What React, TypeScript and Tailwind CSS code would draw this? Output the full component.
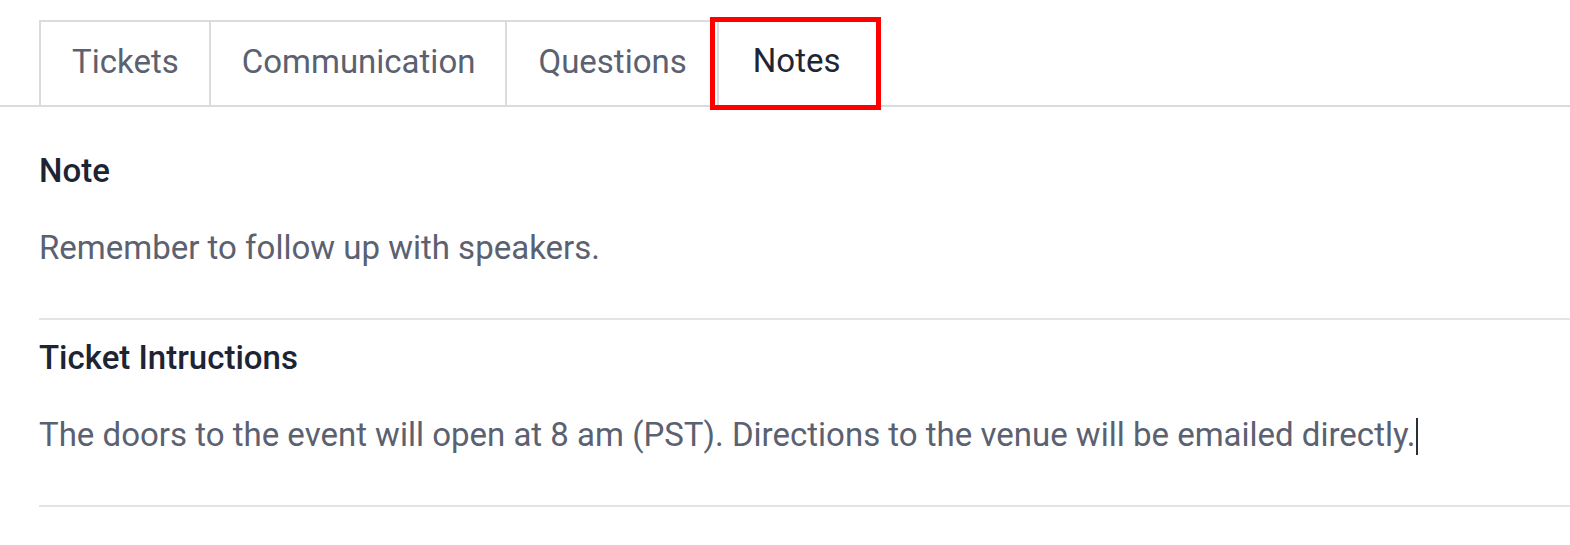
const tabs = ['Tickets', 'Communication', 'Questions', 'Notes'];

const Field = ({ label, value, caret }: { label: string; value: string; caret?: boolean }) => (
  <div className="border-b-2 border-[#e3e4e7]">
    <div className="pt-[18px] text-[33px] leading-[40px] font-medium text-[#1d2433]">{label}</div>
    <div className="mt-[37px] pb-[50px] text-[33px] leading-[40px] text-[#5b6170]">
      {value}
      {caret && <span className="inline-block w-[2px] h-[37px] bg-[#2a2f3a] align-[-9px]" />}
    </div>
  </div>
);

export default function App() {
  return (
    <div className="w-[1570px] h-[545px] bg-white overflow-hidden" style={{ fontFamily: 'Roboto, "Liberation Sans", sans-serif' }}>
      <div className="pt-[20px] border-b-2 border-[#d9dbdf]">
        <div className="flex pl-[39px] h-[85px]">
          {tabs.map((t, i) => {
            const active = t === 'Notes';
            return (
              <div
                key={t}
                className={
                  active
                    ? 'relative flex items-center pb-[4px] px-[34px] text-[33px] text-[#1f2533]'
                    : 'flex items-center pb-[4px] pl-[31px] pr-[30px] text-[33px] text-[#5b6170] border-t-2 border-l-2 border-[#d9dbdf]' +
                      (i === 2 ? ' border-r-2' : '')
                }
              >
                {t}
                {active && <div className="absolute left-[-9px] right-[-7px] top-[-3px] bottom-[-5px] border-[5px] border-[#ff0000]" />}
              </div>
            );
          })}
        </div>
      </div>
      <div className="pl-[39px] pt-[26px]">
        <Field label="Note" value="Remember to follow up with speakers." />
        <Field
          label="Ticket Intructions"
          value="The doors to the event will open at 8 am (PST). Directions to the venue will be emailed directly."
          caret
        />
      </div>
    </div>
  );
}
